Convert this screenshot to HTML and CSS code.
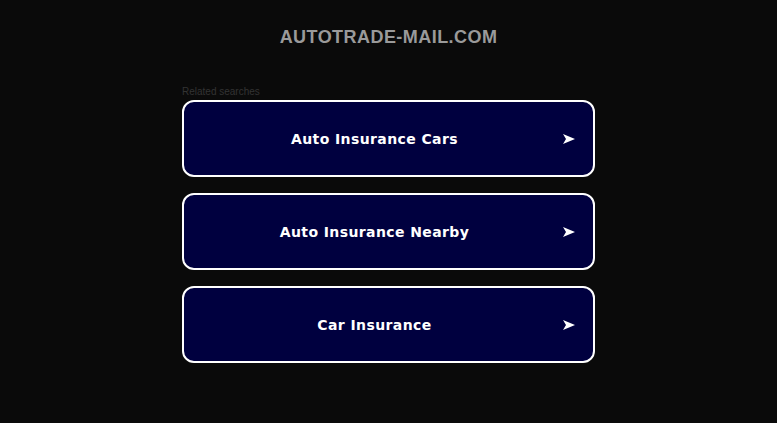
FILE: index.html
```html
<!DOCTYPE html>
<html>
<head>
<meta charset="utf-8">
<link rel="stylesheet" href="styles.css">
</head>
<body>
<div class="page">
  <h1 class="title">AUTOTRADE-MAIL.COM</h1>
  <div class="related">
    <div class="related-label">Related searches</div>
    <a class="item" href="#"><span class="item-text">Auto Insurance Cars</span><svg class="arrow" viewBox="0 0 12 10" width="12" height="10"><polygon points="0,0 12,5 0,10 3,5" fill="#fff"/></svg></a>
    <a class="item" href="#"><span class="item-text">Auto Insurance Nearby</span><svg class="arrow" viewBox="0 0 12 10" width="12" height="10"><polygon points="0,0 12,5 0,10 3,5" fill="#fff"/></svg></a>
    <a class="item" href="#"><span class="item-text">Car Insurance</span><svg class="arrow" viewBox="0 0 12 10" width="12" height="10"><polygon points="0,0 12,5 0,10 3,5" fill="#fff"/></svg></a>
  </div>
</div>
</body>
</html>
```
FILE: styles.css
```css
html, body {
  margin: 0;
  padding: 0;
  background: #0a0a0a;
}
.page {
  display: flex;
  flex-direction: column;
  align-items: center;
  padding-top: 27px;
}
.title {
  margin: 0;
  font-family: "Liberation Sans", Arial, sans-serif;
  font-weight: bold;
  font-size: 18px;
  line-height: 21px;
  color: #9a9a9a;
  letter-spacing: 0.45px;
}
.related {
  width: 413px;
  margin-top: 38px;
  display: flex;
  flex-direction: column;
  gap: 16px;
}
.related-label {
  font-family: "Liberation Sans", Arial, sans-serif;
  font-size: 10px;
  line-height: 12px;
  color: #333;
  margin-bottom: -14px;
}
.item {
  box-sizing: border-box;
  height: 77px;
  border: 2px solid #fff;
  border-radius: 12px;
  background: #00003f;
  display: flex;
  align-items: center;
  padding: 0 18px 0 20px;
  gap: 18px;
  text-decoration: none;
}
.item-text {
  flex: 1;
  text-align: center;
  font-family: "DejaVu Sans", Verdana, sans-serif;
  font-weight: bold;
  font-size: 14px;
  letter-spacing: 0.4px;
  color: #fff;
}
.arrow {
  flex: none;
  display: block;
}
```
